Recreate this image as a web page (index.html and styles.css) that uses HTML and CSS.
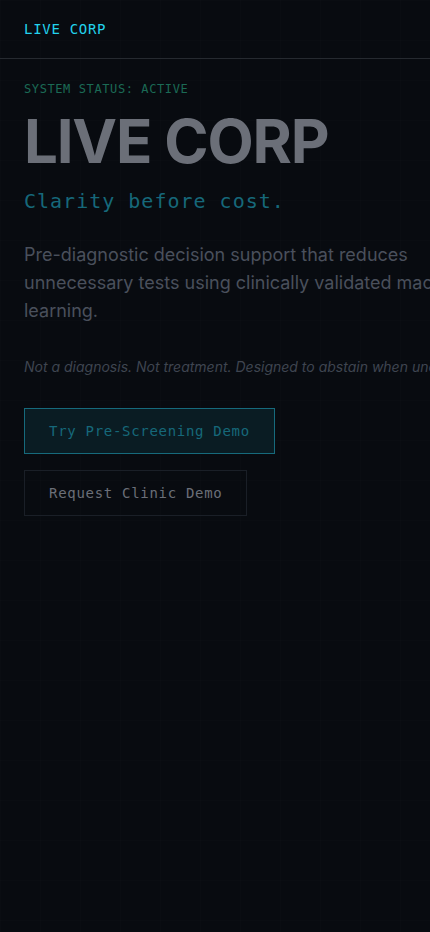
FILE: index.html
```html
<!DOCTYPE html>
<html lang="en">
<head>
<meta charset="utf-8">
<meta name="viewport" content="width=device-width, initial-scale=1">
<title>LIVE CORP</title>
<link rel="stylesheet" href="styles.css">
</head>
<body>
<div class="page">
  <header class="topbar">
    <div class="brand">LIVE CORP</div>
  </header>
  <main class="hero">
    <div class="status">SYSTEM STATUS: ACTIVE</div>
    <h1 class="title">LIVE CORP</h1>
    <p class="tagline">Clarity before cost.</p>
    <p class="lead">Pre-diagnostic decision support that reduces unnecessary tests using clinically validated machine learning.</p>
    <p class="disclaimer">Not a diagnosis. Not treatment. Designed to abstain when uncertain.</p>
    <div class="actions">
      <a class="btn btn-primary" href="#">Try Pre-Screening Demo</a>
      <a class="btn btn-secondary" href="#">Request Clinic Demo</a>
    </div>
  </main>
</div>
</body>
</html>
```
FILE: styles.css
```css
* { box-sizing: border-box; }
html, body {
  margin: 0;
  padding: 0;
  background: #080b10;
  overflow-x: hidden;
}
body {
  min-height: 932px;
  background-color: #080b10;
  background-image:
    linear-gradient(to right, rgba(255,255,255,0.007) 1px, transparent 1px),
    linear-gradient(to bottom, rgba(255,255,255,0.007) 1px, transparent 1px);
  background-size: 40px 40px;
  font-family: Inter, "Liberation Sans", sans-serif;
}
.page {
  width: 430px;
}
.topbar {
  height: 59px;
  border-bottom: 1px solid #262a30;
  display: flex;
  align-items: center;
  padding: 0 24px;
}
.brand {
  font-family: "DejaVu Sans Mono", "Liberation Mono", monospace;
  font-size: 14px;
  letter-spacing: 0.05em;
  color: #22d3ee;
}
.hero {
  width: 524px;
  padding: 22px 24px 0;
}
.status {
  font-family: "DejaVu Sans Mono", "Liberation Mono", monospace;
  font-size: 12px;
  letter-spacing: 0.05em;
  color: #1b6a55;
  line-height: 16px;
}
.title {
  margin: 14px 0 0;
  font-family: Inter, "Liberation Sans", sans-serif;
  font-weight: 700;
  font-size: 60px;
  line-height: 60px;
  letter-spacing: -0.02em;
  color: #6b6f78;
}
.tagline {
  margin: 16px 0 0;
  font-family: "DejaVu Sans Mono", "Liberation Mono", monospace;
  font-size: 20px;
  line-height: 28px;
  letter-spacing: 0.05em;
  color: #16687a;
}
.lead {
  margin: 26px 0 0;
  font-size: 18px;
  line-height: 28px;
  color: #4a505c;
}
.disclaimer {
  margin: 32px 0 0;
  font-size: 14px;
  line-height: 20px;
  font-style: italic;
  color: #3f4550;
  white-space: nowrap;
}
.actions {
  margin-top: 31px;
  display: flex;
  flex-direction: column;
  align-items: flex-start;
  gap: 16px;
}
.btn {
  display: inline-block;
  padding: 13px 24px;
  font-family: "DejaVu Sans Mono", "Liberation Mono", monospace;
  font-size: 14px;
  line-height: 18px;
  letter-spacing: 0.05em;
  text-decoration: none;
}
.btn-primary {
  background: #0a1c23;
  border: 1px solid #166a7c;
  color: #16687a;
}
.btn-secondary {
  background: transparent;
  border: 1px solid #1a1f27;
  color: #6b6f78;
}
```
